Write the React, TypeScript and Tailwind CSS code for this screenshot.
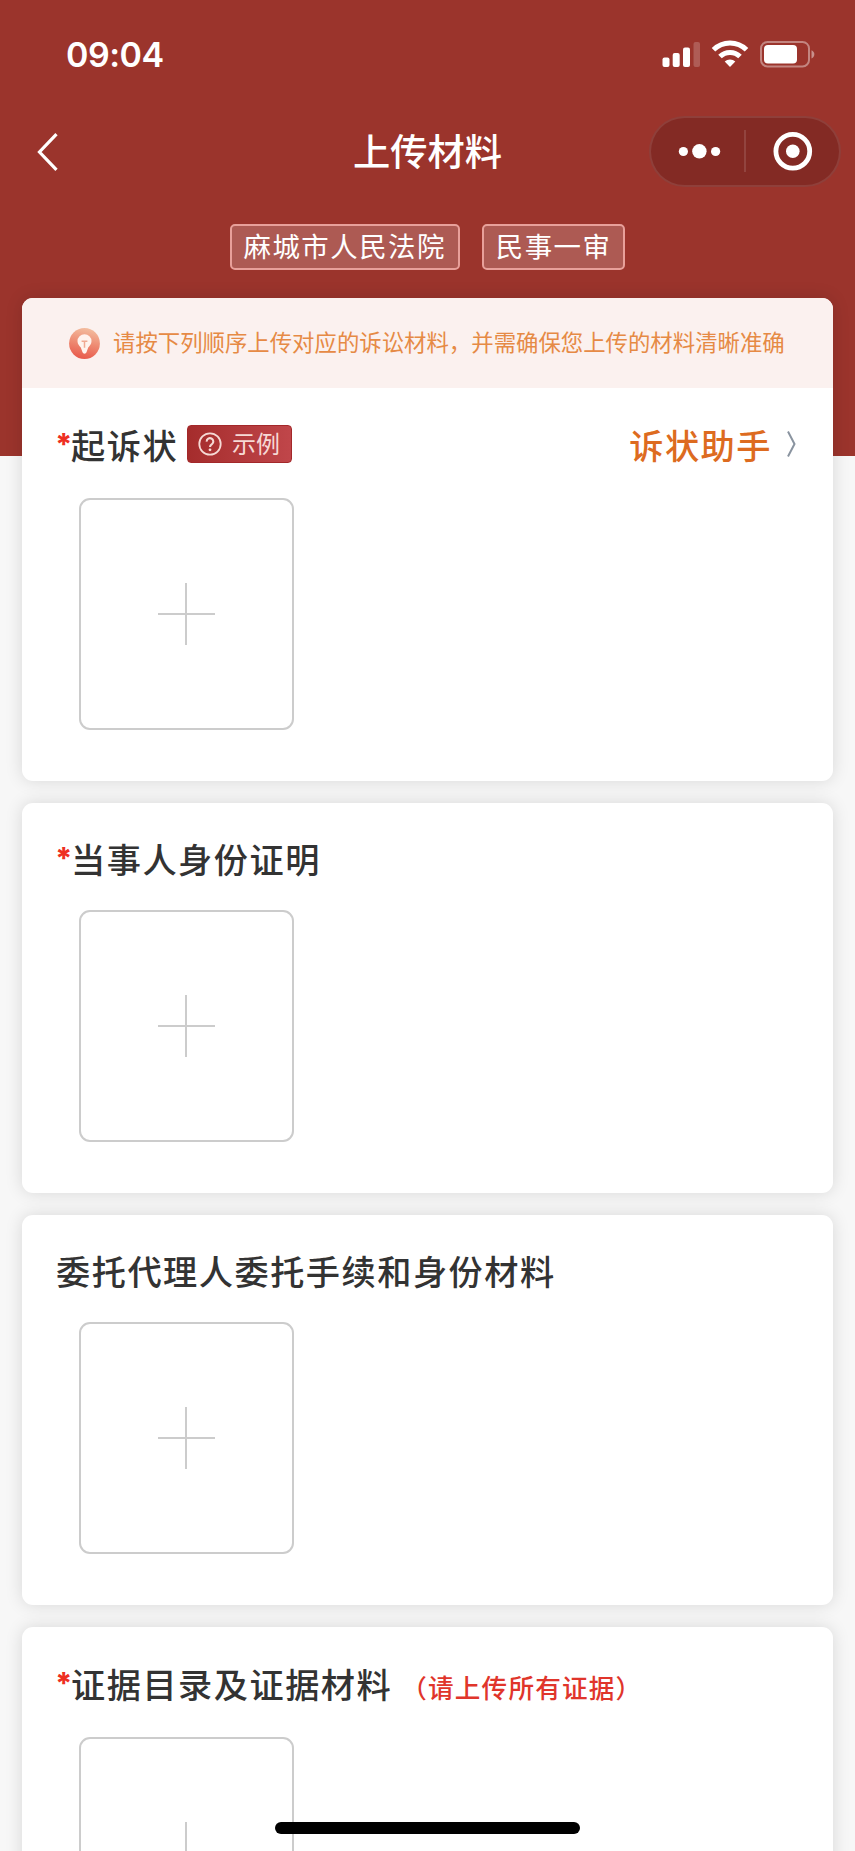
import type { ReactNode } from 'react';

interface Section {
  id: string;
  title: string;
  required?: boolean;
  hint?: string;
}

const sections: Section[] = [
  { id: 'identity', title: '当事人身份证明', required: true },
  { id: 'agent', title: '委托代理人委托手续和身份材料' },
  { id: 'evidence', title: '证据目录及证据材料', required: true, hint: '（请上传所有证据）' },
];

function StatusBar() {
  return (
    <div className="flex h-[108px] items-center justify-between pr-[39px] pl-[66px]">
      <span className="pt-0.5 font-['Inter',sans-serif] text-[34px] leading-none font-semibold tracking-[-0.5px]">09:04</span>
      <svg width="154" height="28" viewBox="0 0 154 28" fill="#fff">
        {/* Signal */}
        <rect x="0.5" y="17.5" width="7" height="9.5" rx="2" />
        <rect x="10.7" y="13" width="7" height="14" rx="2" />
        <rect x="21" y="7.5" width="7" height="19.5" rx="2" />
        <rect x="31.5" y="2" width="6.5" height="25" rx="2" opacity="0.2" />
        {/* Wifi */}
        <g fill="none" stroke="#fff" strokeWidth="5">
          <path d="M51.5 9.8a23.4 23.4 0 0 1 33 0" />
          <path d="M58 16.6a14.2 14.2 0 0 1 20 0" />
        </g>
        <path d="M68 27l-5.3-5.4a7.6 7.6 0 0 1 10.6 0z" />
        {/* Battery */}
        <rect x="99" y="2" width="48" height="24.4" rx="6.5" fill="none" stroke="#fff" strokeWidth="2" opacity="0.4" />
        <rect x="102" y="5" width="33" height="18.5" rx="4" />
        <path d="M149.5 10.2c3.8 1.4 3.8 6.8 0 8.2z" opacity="0.45" />
      </svg>
    </div>
  );
}

function NavBar() {
  return (
    <div className="grid h-[87px] grid-cols-[1fr_auto_1fr] items-center px-[14px]">
      <svg className="ml-[22px]" width="24" height="38" viewBox="0 0 24 38" fill="none" stroke="#fff" strokeWidth="3.2">
        <path d="M20.5 1.2L3.5 19l17 17.8" />
      </svg>
      <h1 className="pb-0.5 text-[37.3px] leading-none font-medium">上传材料</h1>
      <div className="flex h-[71px] w-[192px] items-center justify-self-end rounded-full border-2 border-white/10 bg-[#832a24]">
        <svg width="188" height="67" viewBox="0 0 188 67" fill="#fff">
          <circle cx="32.4" cy="33.5" r="4.6" />
          <circle cx="48.4" cy="33.3" r="7.2" />
          <circle cx="64.6" cy="33.5" r="4.6" />
          <path d="M94 12v42" stroke="#fff" strokeOpacity="0.16" strokeWidth="1.6" />
          <circle cx="141.8" cy="33.3" r="16.9" fill="none" stroke="#fff" strokeWidth="4.8" />
          <circle cx="141.8" cy="33.3" r="6.8" />
        </svg>
      </div>
    </div>
  );
}

function Tag({ children }: { children: ReactNode }) {
  return (
    <span className="flex h-[46px] items-center rounded-[5px] border-2 border-[#e8a09a] bg-[#ad5a53] px-[12px] pb-0.5 text-[27.4px] leading-none tracking-[1.5px]">
      {children}
    </span>
  );
}

function BulbIcon() {
  return (
    <svg width="31" height="31" viewBox="0 0 31 31">
      <defs>
        <linearGradient id="bulb" x1="0.6" y1="0" x2="0.4" y2="1">
          <stop offset="0" stopColor="#f3bd9f" />
          <stop offset="0.5" stopColor="#ee8a72" />
          <stop offset="1" stopColor="#e8594b" />
        </linearGradient>
      </defs>
      <circle cx="15.5" cy="15.5" r="15.4" fill="url(#bulb)" />
      <path
        d="M15.5 6.2a7 7 0 0 0-7 7c0 3 1.8 4.5 3.3 6.2l1.7 4.8a2.1 2.1 0 0 0 4 0l1.7-4.8c1.5-1.7 3.3-3.2 3.3-6.2a7 7 0 0 0-7-7z"
        fill="#fff3ee"
      />
      <path d="M12.6 13.3h5.8M15.5 13.3v6.5" stroke="#f0aa93" strokeWidth="1.5" fill="none" />
    </svg>
  );
}

function SectionTitle({ title, required }: { title: string; required?: boolean }) {
  return (
    <h2 className="flex pt-0.5 text-[34.2px] leading-[48px] font-medium tracking-[1.5px] text-[#333]">
      {required && (
        <span className="-ml-px w-[16px] font-['Inter',sans-serif] text-[30px] font-extrabold tracking-normal text-[#ee2f22]">*</span>
      )}
      <span>{title}</span>
    </h2>
  );
}

function UploadTile() {
  return (
    <button className="ml-[57px] flex h-[232px] w-[215px] shrink-0 items-center justify-center rounded-[11px] border-2 border-[#ccc]">
      <svg width="57" height="62" viewBox="0 0 57 62" stroke="#ccc" strokeWidth="2">
        <path d="M0 31h57M28 0v62" />
      </svg>
    </button>
  );
}

export default function App() {
  return (
    <div className="relative h-[1851px] w-[855px] overflow-hidden bg-[linear-gradient(#9b342c_456px,#f7f7f7_456px)] font-['Noto_Sans_CJK_SC',sans-serif]">
      <header className="h-[298px] text-white">
        <StatusBar />
        <NavBar />
        <div className="flex justify-center gap-[22px] pt-[29px]">
          <Tag>麻城市人民法院</Tag>
          <Tag>民事一审</Tag>
        </div>
      </header>

      <main className="flex flex-col gap-[22px] px-[22px]">
        {/* Complaint */}
        <section className="h-[483px] rounded-[11px] bg-white shadow-[0_0_17px_rgba(0,0,0,0.13)]">
          <div className="flex h-[90px] items-center rounded-t-[11px] bg-[#fbf1ef] pl-[47px] text-[#e68a45]">
            <BulbIcon />
            <p className="ml-[13px] pb-[3px] text-[22.4px] leading-none whitespace-nowrap">
              请按下列顺序上传对应的诉讼材料，并需确保您上传的材料清晰准确
            </p>
          </div>
          <div className="flex h-[110px] items-center pr-[36px] pl-[34px]">
            <SectionTitle title="起诉状" required />
            <span className="mt-0.5 ml-[9px] flex h-[38px] w-[105px] items-center rounded-[4px] border border-[#a3282a] bg-linear-to-r from-[#a52c2c] to-[#c0464a] pl-[10px] text-[#f6d9d5]">
              <svg width="24" height="24" viewBox="0 0 24 24" fill="none" stroke="currentColor" strokeWidth="1.8">
                <circle cx="12" cy="12" r="10.7" />
                <path d="M8.7 9.6a3.3 3.3 0 1 1 5.2 2.6c-1.2.8-1.9 1.3-1.9 2.7" strokeWidth="2.1" />
                <circle cx="12" cy="17.8" r="1.4" fill="currentColor" stroke="none" />
              </svg>
              <span className="ml-[10px] pb-0.5 text-[24px] leading-none">示例</span>
            </span>
            <a className="ml-auto flex items-center pt-0.5 text-[34.2px] leading-[48px] font-medium tracking-[1.5px] text-[#dd6b20]">
              诉状助手
              <svg className="ml-[14px]" width="11" height="28" viewBox="0 0 11 28" fill="none" stroke="#8a94a0" strokeWidth="2">
                <path d="M2 1.5l6.5 12.5L2 26.5" />
              </svg>
            </a>
          </div>
          <UploadTile />
        </section>

        {sections.map((s) => (
          <section
            key={s.id}
            className="flex h-[390px] shrink-0 flex-col rounded-[11px] bg-white shadow-[0_0_17px_rgba(0,0,0,0.13)]"
          >
            <div className={s.hint ? 'flex h-[110px] items-center pl-[34px]' : 'flex h-[107px] items-center pl-[34px]'}>
              <SectionTitle title={s.title} required={s.required} />
              {s.hint && (
                <span className="ml-[9px] pt-2.5 text-[25.6px] leading-none font-medium tracking-[1.2px] text-[#e0352b]">
                  {s.hint}
                </span>
              )}
            </div>
            <UploadTile />
          </section>
        ))}
      </main>

      {/* Home indicator */}
      <div className="absolute top-[1822px] left-[275px] h-[12px] w-[305px] rounded-full bg-black" />
    </div>
  );
}
